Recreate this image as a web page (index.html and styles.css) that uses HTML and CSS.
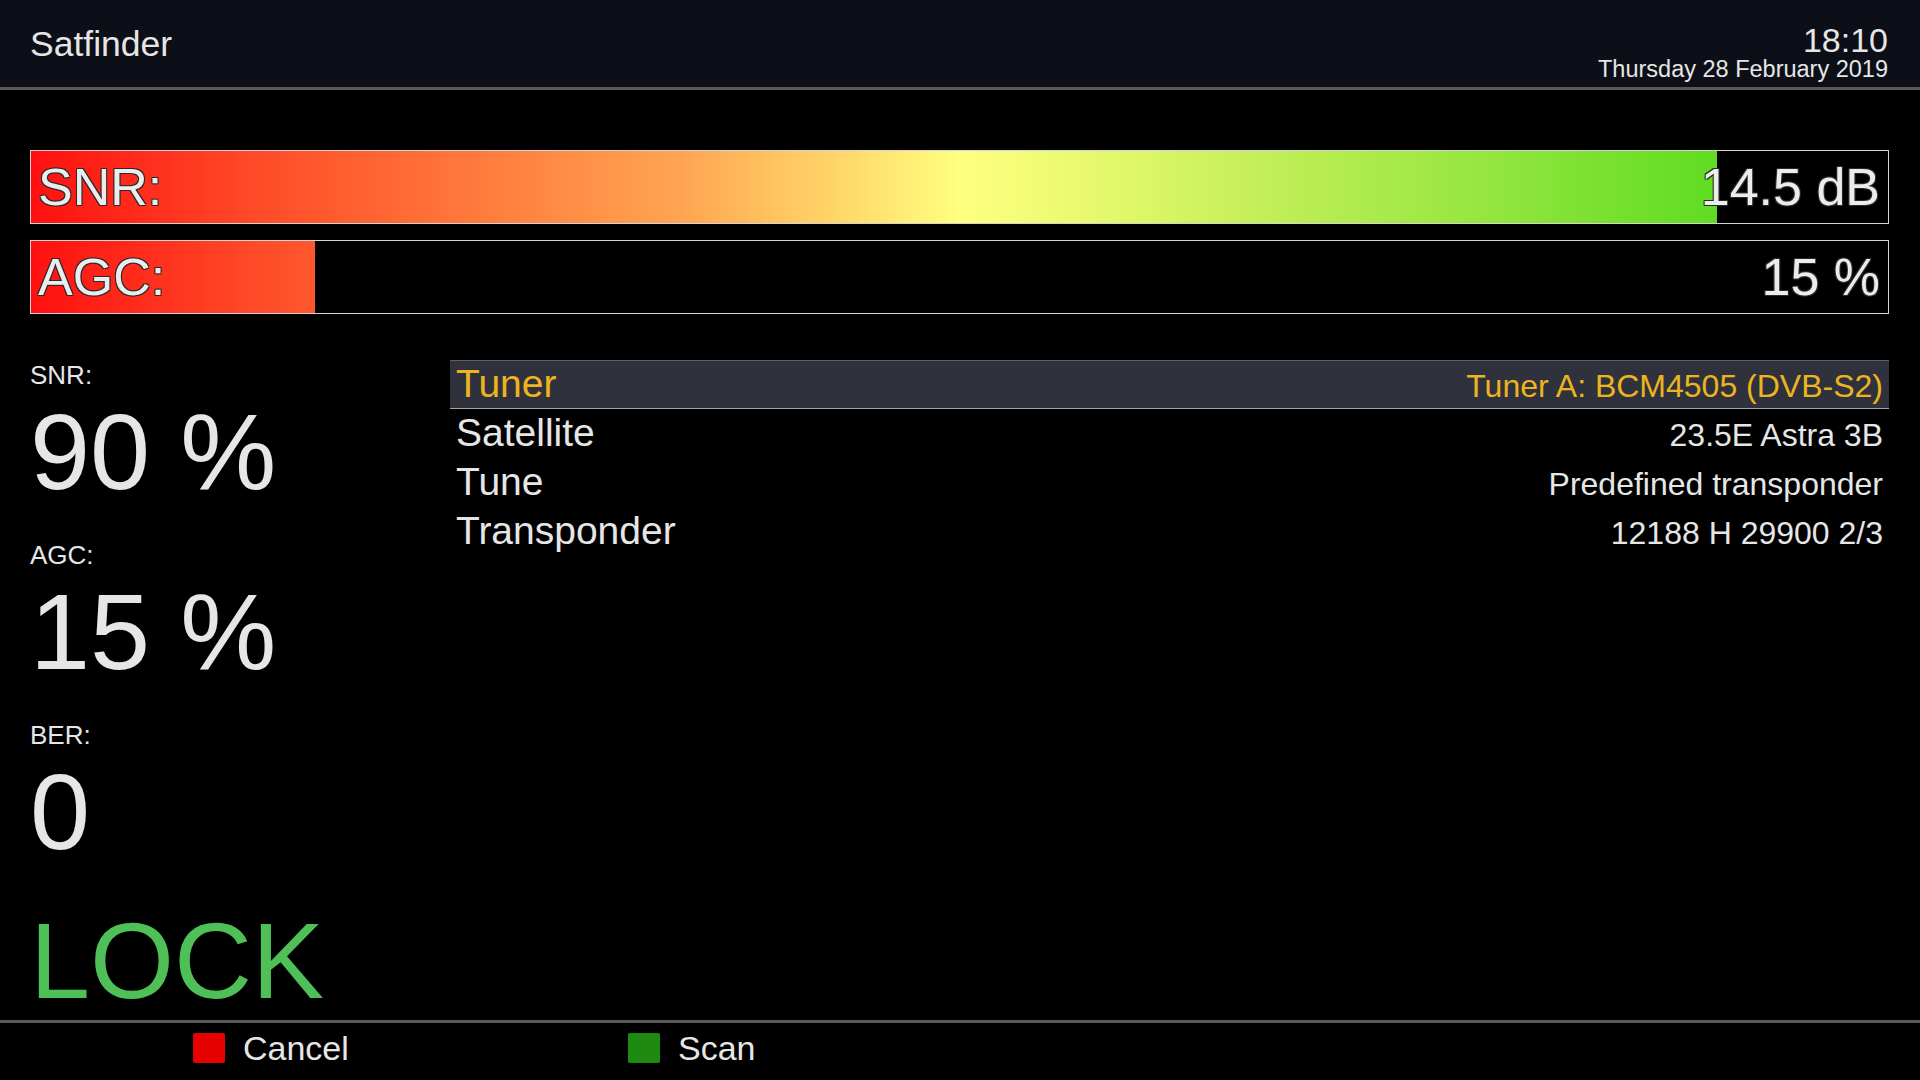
FILE: index.html
```html
<!DOCTYPE html>
<html lang="en">
<head>
<meta charset="utf-8">
<title>Satfinder</title>
<link rel="stylesheet" href="styles.css">
</head>
<body>
<div class="screen">
  <header class="topbar">
    <div class="title">Satfinder</div>
    <div class="clock">
      <div class="clock-time">18:10</div>
      <div class="clock-date">Thursday 28 February 2019</div>
    </div>
  </header>

  <main class="content">
    <section class="meters">
      <div class="meter">
        <div class="meter-fill" style="width:90.8%"></div>
        <span class="meter-label">SNR:</span>
        <span class="meter-value">14.5 dB</span>
      </div>
      <div class="meter">
        <div class="meter-fill" style="width:15.3%"></div>
        <span class="meter-label">AGC:</span>
        <span class="meter-value">15 %</span>
      </div>
    </section>

    <section class="details">
      <div class="readouts">
        <div class="readout">
          <div class="readout-label">SNR:</div>
          <div class="readout-value">90 %</div>
        </div>
        <div class="readout">
          <div class="readout-label">AGC:</div>
          <div class="readout-value">15 %</div>
        </div>
        <div class="readout">
          <div class="readout-label">BER:</div>
          <div class="readout-value">0</div>
        </div>
        <div class="lock-state">LOCK</div>
      </div>

      <ul class="config">
        <li class="config-row is-selected">
          <span class="config-name">Tuner</span>
          <span class="config-value">Tuner A: BCM4505 (DVB-S2)</span>
        </li>
        <li class="config-row">
          <span class="config-name">Satellite</span>
          <span class="config-value">23.5E Astra 3B</span>
        </li>
        <li class="config-row">
          <span class="config-name">Tune</span>
          <span class="config-value">Predefined transponder</span>
        </li>
        <li class="config-row">
          <span class="config-name">Transponder</span>
          <span class="config-value">12188 H 29900 2/3</span>
        </li>
      </ul>
    </section>
  </main>

  <footer class="buttonbar">
    <div class="key">
      <span class="key-swatch key-red"></span>
      <span class="key-text">Cancel</span>
    </div>
    <div class="key">
      <span class="key-swatch key-green"></span>
      <span class="key-text">Scan</span>
    </div>
  </footer>
</div>
</body>
</html>
```

FILE: styles.css
```css
* {
  box-sizing: border-box;
}

html, body {
  margin: 0;
  padding: 0;
  background: #000;
}

body {
  font-family: "Liberation Sans", Arial, sans-serif;
  color: #e6e6e6;
}

.screen {
  width: 1920px;
  height: 1080px;
  display: flex;
  flex-direction: column;
  overflow: hidden;
}

/* ---------- top bar ---------- */
.topbar {
  flex: 0 0 auto;
  height: 90px;
  background: #0c0f17;
  border-bottom: 3px solid #58585e;
  display: flex;
  justify-content: space-between;
  align-items: flex-start;
  padding: 0 32px 0 30px;
}

.title {
  margin-top: 24px;
  font-size: 35.5px;
  line-height: 40px;
}

.clock {
  margin-top: 24px;
  text-align: right;
}

.clock-time {
  font-size: 34px;
  line-height: 32px;
}

.clock-date {
  margin-top: 2px;
  font-size: 23.5px;
  line-height: 23px;
}

/* ---------- main area ---------- */
.content {
  flex: 1 1 0;
  min-height: 0;
  padding: 60px 31px 0 30px;
}

.meters {
  display: flex;
  flex-direction: column;
  gap: 16px;
}

.meter {
  display: grid;
  height: 74px;
  border: 1px solid #d4d4d4;
  align-items: center;
  background: #000;
}

.meter > * {
  grid-area: 1 / 1;
}

.meter-fill {
  height: 100%;
  justify-self: start;
  background: linear-gradient(90deg,
    #ff1010 0%,
    #ff4a28 12%,
    #ff7a3c 24%,
    #ffa552 35%,
    #ffd468 43%,
    #ffff80 50%,
    #e4f86c 58%,
    #c4ef58 66%,
    #96e640 78%,
    #5edc20 91%,
    #48d412 100%);
  background-size: 1857px 100%;
  background-repeat: no-repeat;
}

.meter-label,
.meter-value {
  font-size: 52px;
  line-height: 1;
  color: #ececec;
  text-shadow:
    -1px -1px 0 #2a2a2a,
     1px -1px 0 #2a2a2a,
    -1px  1px 0 #2a2a2a,
     1px  1px 0 #2a2a2a;
}

.meter-label {
  justify-self: start;
  padding-left: 7px;
}

.meter-value {
  justify-self: end;
  padding-right: 8px;
}

/* ---------- readouts + config list ---------- */
.details {
  margin-top: 46px;
  display: grid;
  grid-template-columns: 420px 1fr;
}

.readouts {
  display: flex;
  flex-direction: column;
  gap: 28px;
}

.readout-label {
  font-size: 26px;
  line-height: 31px;
}

.readout-value {
  font-size: 108px;
  line-height: 121px;
}

.lock-state {
  font-size: 108px;
  line-height: 121px;
  color: #4fc057;
}

.config {
  list-style: none;
  margin: 0;
  padding: 0;
}

.config-row {
  height: 49px;
  display: flex;
  justify-content: space-between;
  align-items: baseline;
  padding: 0 6px;
  border-top: 1px solid transparent;
  border-bottom: 1px solid transparent;
}

.config-row.is-selected {
  background: #2f313d;
  border-top-color: #5e6068;
  border-bottom-color: #a4a4a8;
  color: #ecb41e;
}

.config-name {
  font-size: 39px;
  line-height: 46px;
}

.config-value {
  font-size: 32px;
  line-height: 46px;
}

/* ---------- colour key bar ---------- */
.buttonbar {
  flex: 0 0 auto;
  height: 60px;
  border-top: 3px solid #58585e;
  display: flex;
  align-items: flex-start;
  padding: 10px 0 0 193px;
}

.key {
  width: 435px;
  display: flex;
  align-items: center;
  gap: 18px;
}

.key-swatch {
  width: 32px;
  height: 30px;
  border-radius: 2px;
}

.key-red {
  background: #e60000;
}

.key-green {
  background: #1f8a10;
}

.key-text {
  font-size: 34px;
  line-height: 30px;
}
```
